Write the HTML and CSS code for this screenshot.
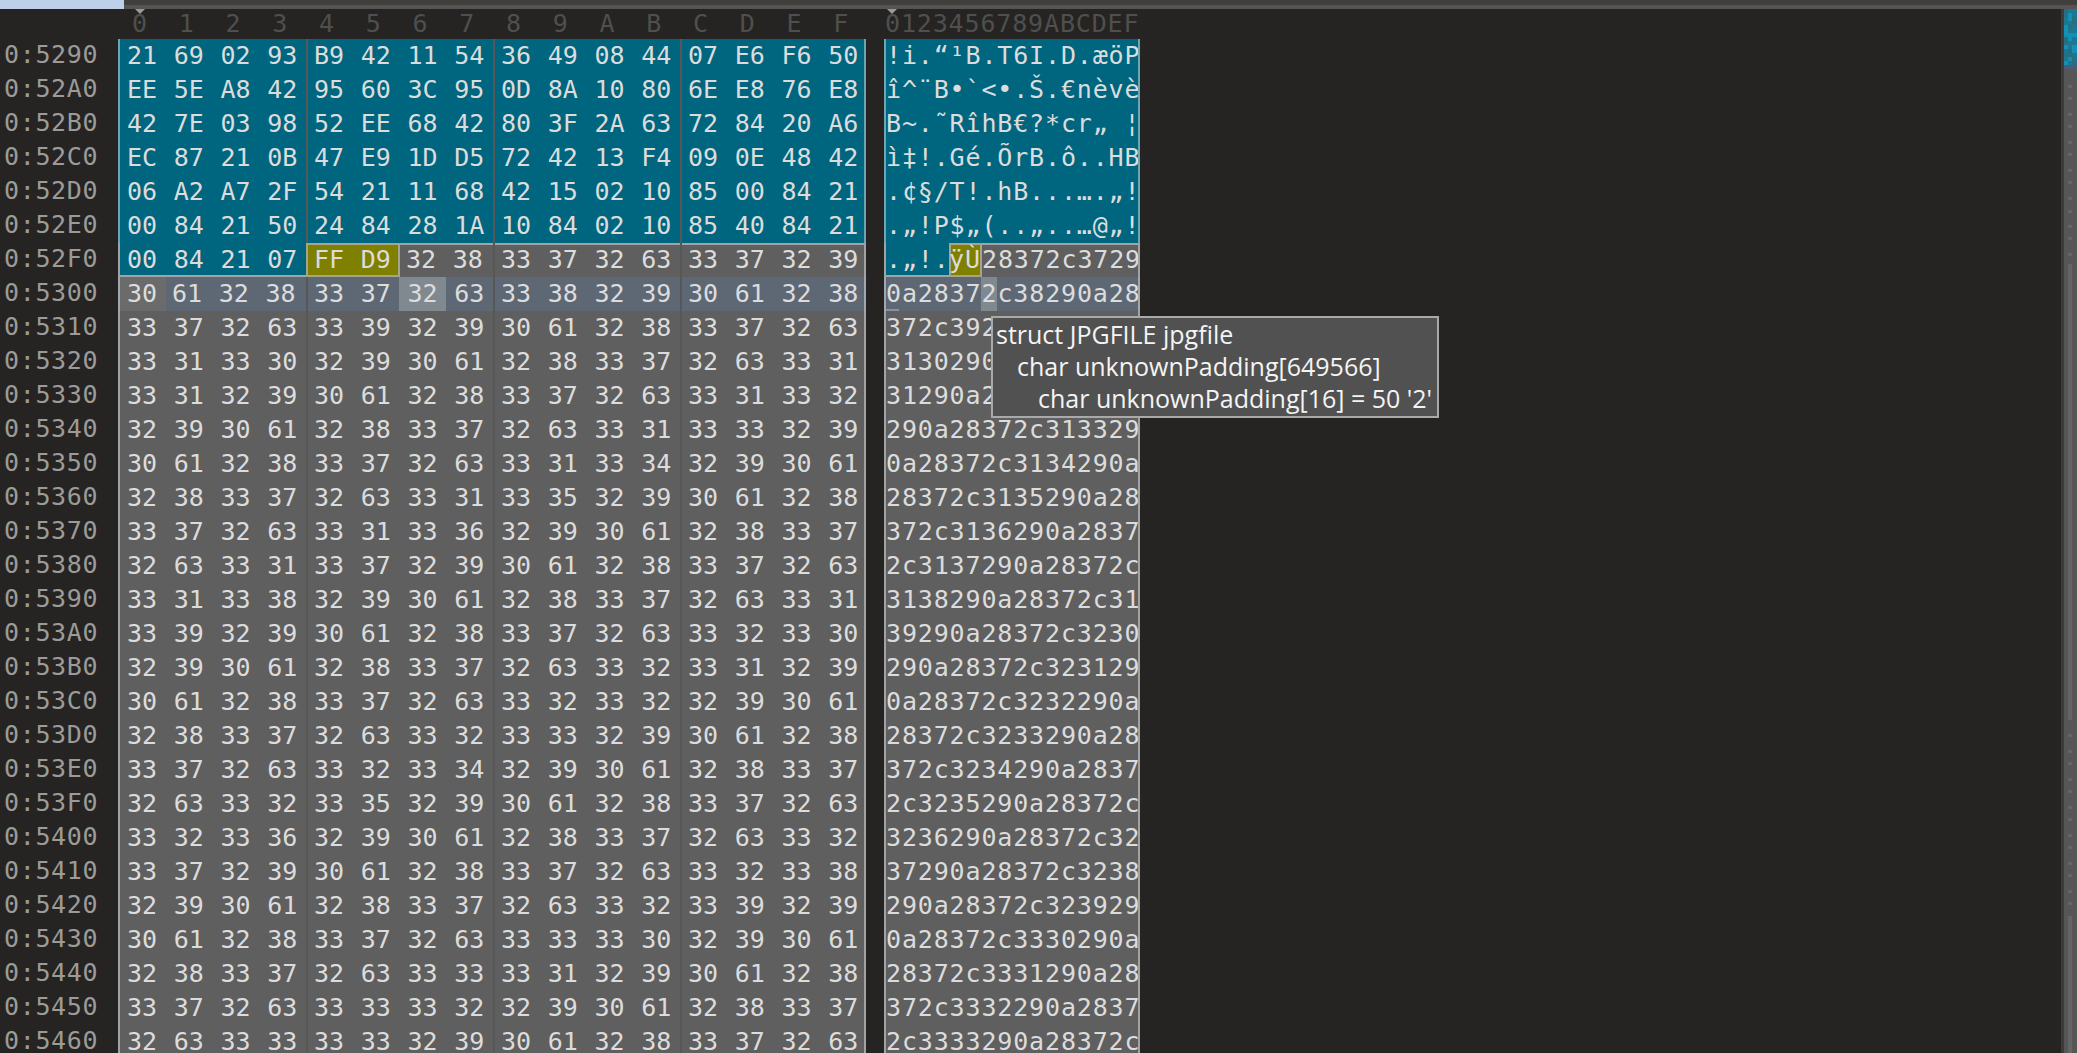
FILE: index.html
```html
<!DOCTYPE html>
<html lang="en">
<head>
<meta charset="utf-8">
<title>Hex editor</title>
<link rel="stylesheet" href="styles.css">
</head>
<body>
<div class="top"><div class="tab"></div><div class="rail"></div></div>
<div class="main">
<div class="view">
<div class="head"><div class="head-hex">0 1 2 3 4 5 6 7 8 9 A B C D E F</div><div class="head-ascii">0123456789ABCDEF</div></div>

<div class="row"><span class="addr">0:5290</span><div class="hex sel"><div class="g">21 69 02 93</div><div class="g">B9 42 11 54</div><div class="g">36 49 08 44</div><div class="g">07 E6 F6 50</div></div><div class="ascii sel">!i.“¹B.T6I.D.æöP</div></div>
<div class="row"><span class="addr">0:52A0</span><div class="hex sel"><div class="g">EE 5E A8 42</div><div class="g">95 60 3C 95</div><div class="g">0D 8A 10 80</div><div class="g">6E E8 76 E8</div></div><div class="ascii sel">î^¨B•`&lt;•.Š.€nèvè</div></div>
<div class="row"><span class="addr">0:52B0</span><div class="hex sel"><div class="g">42 7E 03 98</div><div class="g">52 EE 68 42</div><div class="g">80 3F 2A 63</div><div class="g">72 84 20 A6</div></div><div class="ascii sel">B~.˜RîhB€?*cr„&nbsp;¦</div></div>
<div class="row"><span class="addr">0:52C0</span><div class="hex sel"><div class="g">EC 87 21 0B</div><div class="g">47 E9 1D D5</div><div class="g">72 42 13 F4</div><div class="g">09 0E 48 42</div></div><div class="ascii sel">ì‡!.Gé.ÕrB.ô..HB</div></div>
<div class="row"><span class="addr">0:52D0</span><div class="hex sel"><div class="g">06 A2 A7 2F</div><div class="g">54 21 11 68</div><div class="g">42 15 02 10</div><div class="g">85 00 84 21</div></div><div class="ascii sel">.¢§/T!.hB...….„!</div></div>
<div class="row"><span class="addr">0:52E0</span><div class="hex sel"><div class="g">00 84 21 50</div><div class="g">24 84 28 1A</div><div class="g">10 84 02 10</div><div class="g">85 40 84 21</div></div><div class="ascii sel">.„!P$„(..„..…@„!</div></div>

<div class="row"><span class="addr">0:52F0</span><div class="hex"><div class="g sel edge-b">00 84 21 07</div><div class="g cells"><span class="hit">FF D9</span><span class="rest">32 38</span></div><div class="g edge-t">33 37 32 63</div><div class="g edge-t">33 37 32 39</div></div><div class="ascii split"><span class="sel edge-b a4">.„!.</span><span class="hit a2">ÿÙ</span><span class="rest">28372c3729</span></div></div>

<div class="row"><span class="addr">0:5300</span><div class="hex cur"><div class="g cells"><span class="c first">30</span><span class="c">61</span><span class="c">32</span><span class="c">38</span></div><div class="g cells"><span class="c">33</span><span class="c">37</span><span class="c here">32</span><span class="c">63</span></div><div class="g">33 38 32 39</div><div class="g">30 61 32 38</div></div><div class="ascii split cur tick"><span>0a2837</span><span class="here a1">2</span><span>c38290a28</span></div></div>

<div class="row"><span class="addr">0:5310</span><div class="hex"><div class="g">33 37 32 63</div><div class="g">33 39 32 39</div><div class="g">30 61 32 38</div><div class="g">33 37 32 63</div></div><div class="ascii">372c39290a28372c</div></div>
<div class="row"><span class="addr">0:5320</span><div class="hex"><div class="g">33 31 33 30</div><div class="g">32 39 30 61</div><div class="g">32 38 33 37</div><div class="g">32 63 33 31</div></div><div class="ascii">3130290a28372c31</div></div>
<div class="row"><span class="addr">0:5330</span><div class="hex"><div class="g">33 31 32 39</div><div class="g">30 61 32 38</div><div class="g">33 37 32 63</div><div class="g">33 31 33 32</div></div><div class="ascii">31290a28372c3132</div></div>
<div class="row"><span class="addr">0:5340</span><div class="hex"><div class="g">32 39 30 61</div><div class="g">32 38 33 37</div><div class="g">32 63 33 31</div><div class="g">33 33 32 39</div></div><div class="ascii">290a28372c313329</div></div>
<div class="row"><span class="addr">0:5350</span><div class="hex"><div class="g">30 61 32 38</div><div class="g">33 37 32 63</div><div class="g">33 31 33 34</div><div class="g">32 39 30 61</div></div><div class="ascii">0a28372c3134290a</div></div>
<div class="row"><span class="addr">0:5360</span><div class="hex"><div class="g">32 38 33 37</div><div class="g">32 63 33 31</div><div class="g">33 35 32 39</div><div class="g">30 61 32 38</div></div><div class="ascii">28372c3135290a28</div></div>
<div class="row"><span class="addr">0:5370</span><div class="hex"><div class="g">33 37 32 63</div><div class="g">33 31 33 36</div><div class="g">32 39 30 61</div><div class="g">32 38 33 37</div></div><div class="ascii">372c3136290a2837</div></div>
<div class="row"><span class="addr">0:5380</span><div class="hex"><div class="g">32 63 33 31</div><div class="g">33 37 32 39</div><div class="g">30 61 32 38</div><div class="g">33 37 32 63</div></div><div class="ascii">2c3137290a28372c</div></div>
<div class="row"><span class="addr">0:5390</span><div class="hex"><div class="g">33 31 33 38</div><div class="g">32 39 30 61</div><div class="g">32 38 33 37</div><div class="g">32 63 33 31</div></div><div class="ascii">3138290a28372c31</div></div>
<div class="row"><span class="addr">0:53A0</span><div class="hex"><div class="g">33 39 32 39</div><div class="g">30 61 32 38</div><div class="g">33 37 32 63</div><div class="g">33 32 33 30</div></div><div class="ascii">39290a28372c3230</div></div>
<div class="row"><span class="addr">0:53B0</span><div class="hex"><div class="g">32 39 30 61</div><div class="g">32 38 33 37</div><div class="g">32 63 33 32</div><div class="g">33 31 32 39</div></div><div class="ascii">290a28372c323129</div></div>
<div class="row"><span class="addr">0:53C0</span><div class="hex"><div class="g">30 61 32 38</div><div class="g">33 37 32 63</div><div class="g">33 32 33 32</div><div class="g">32 39 30 61</div></div><div class="ascii">0a28372c3232290a</div></div>
<div class="row"><span class="addr">0:53D0</span><div class="hex"><div class="g">32 38 33 37</div><div class="g">32 63 33 32</div><div class="g">33 33 32 39</div><div class="g">30 61 32 38</div></div><div class="ascii">28372c3233290a28</div></div>
<div class="row"><span class="addr">0:53E0</span><div class="hex"><div class="g">33 37 32 63</div><div class="g">33 32 33 34</div><div class="g">32 39 30 61</div><div class="g">32 38 33 37</div></div><div class="ascii">372c3234290a2837</div></div>
<div class="row"><span class="addr">0:53F0</span><div class="hex"><div class="g">32 63 33 32</div><div class="g">33 35 32 39</div><div class="g">30 61 32 38</div><div class="g">33 37 32 63</div></div><div class="ascii">2c3235290a28372c</div></div>
<div class="row"><span class="addr">0:5400</span><div class="hex"><div class="g">33 32 33 36</div><div class="g">32 39 30 61</div><div class="g">32 38 33 37</div><div class="g">32 63 33 32</div></div><div class="ascii">3236290a28372c32</div></div>
<div class="row"><span class="addr">0:5410</span><div class="hex"><div class="g">33 37 32 39</div><div class="g">30 61 32 38</div><div class="g">33 37 32 63</div><div class="g">33 32 33 38</div></div><div class="ascii">37290a28372c3238</div></div>
<div class="row"><span class="addr">0:5420</span><div class="hex"><div class="g">32 39 30 61</div><div class="g">32 38 33 37</div><div class="g">32 63 33 32</div><div class="g">33 39 32 39</div></div><div class="ascii">290a28372c323929</div></div>
<div class="row"><span class="addr">0:5430</span><div class="hex"><div class="g">30 61 32 38</div><div class="g">33 37 32 63</div><div class="g">33 33 33 30</div><div class="g">32 39 30 61</div></div><div class="ascii">0a28372c3330290a</div></div>
<div class="row"><span class="addr">0:5440</span><div class="hex"><div class="g">32 38 33 37</div><div class="g">32 63 33 33</div><div class="g">33 31 32 39</div><div class="g">30 61 32 38</div></div><div class="ascii">28372c3331290a28</div></div>
<div class="row"><span class="addr">0:5450</span><div class="hex"><div class="g">33 37 32 63</div><div class="g">33 33 33 32</div><div class="g">32 39 30 61</div><div class="g">32 38 33 37</div></div><div class="ascii">372c3332290a2837</div></div>
<div class="row"><span class="addr">0:5460</span><div class="hex"><div class="g">32 63 33 33</div><div class="g">33 33 32 39</div><div class="g">30 61 32 38</div><div class="g">33 37 32 63</div></div><div class="ascii">2c3333290a28372c</div></div>
</div>

<svg class="map" viewBox="0 0 16 1044" width="16" height="1044" aria-hidden="true">
<rect x="0" y="0" width="3" height="1044" fill="#3b3b3a"/>
<rect x="3" y="0" width="13" height="1044" fill="#565656"/>
<rect x="3" y="0" width="13" height="56" fill="#1a7893"/>
<g fill="#1490b4">
<rect x="3" y="16" width="4" height="12"/><rect x="7" y="4" width="4" height="8"/><rect x="11" y="24" width="5" height="4"/><rect x="7" y="24" width="4" height="8"/><rect x="3" y="36" width="4" height="4"/><rect x="11" y="36" width="5" height="8"/><rect x="7" y="48" width="4" height="4"/><rect x="3" y="52" width="4" height="4"/>
</g>
<g fill="#2a6d80">
<rect x="3" y="0" width="4" height="8"/><rect x="11" y="8" width="5" height="8"/><rect x="7" y="16" width="4" height="4"/><rect x="3" y="28" width="4" height="8"/><rect x="7" y="40" width="4" height="8"/><rect x="11" y="48" width="5" height="8"/><rect x="3" y="44" width="4" height="4"/>
</g>
<rect x="3" y="56" width="13" height="4" fill="#4a5a78"/>
<g fill="#656565">
<rect x="7" y="76" width="4" height="3"/><rect x="7" y="88" width="4" height="3"/><rect x="7" y="104" width="4" height="3"/><rect x="7" y="116" width="4" height="3"/><rect x="7" y="132" width="4" height="3"/><rect x="7" y="144" width="4" height="3"/><rect x="7" y="160" width="4" height="3"/><rect x="7" y="172" width="4" height="3"/><rect x="7" y="188" width="4" height="3"/><rect x="7" y="201" width="4" height="3"/><rect x="7" y="216" width="4" height="3"/><rect x="7" y="228" width="4" height="3"/><rect x="7" y="244" width="4" height="3"/>
<rect x="7" y="255" width="4" height="456"/>
<rect x="7" y="725" width="4" height="3"/><rect x="7" y="741" width="4" height="3"/><rect x="7" y="753" width="4" height="3"/><rect x="7" y="769" width="4" height="3"/><rect x="7" y="781" width="4" height="3"/><rect x="7" y="797" width="4" height="3"/><rect x="7" y="809" width="4" height="3"/><rect x="7" y="825" width="4" height="3"/><rect x="7" y="837" width="4" height="3"/><rect x="7" y="853" width="4" height="3"/><rect x="7" y="865" width="4" height="3"/><rect x="7" y="881" width="4" height="3"/><rect x="7" y="893" width="4" height="3"/>
<rect x="7" y="907" width="4" height="137"/>
</g>
</svg>
</div>

<div class="tip">
<div>struct JPGFILE jpgfile</div>
<div class="l2">char unknownPadding[649566]</div>
<div class="l3">char unknownPadding[16] = 50 '2'</div>
</div>
</body>
</html>
```
FILE: styles.css
```css
html, body {
  margin: 0;
  height: 1053px;
  overflow: hidden;
  background: #252423;
}

body {
  font-family: "DejaVu Sans Mono", "Liberation Mono", monospace;
  font-size: 25px;
  line-height: 34px;
  color: #dcdcdc;
  white-space: nowrap;
}

.top {
  display: flex;
  height: 9px;
}

.tab {
  width: 124px;
  background: #bcd0ea;
}

.rail {
  flex: 1;
  background: #403f3c;
  border-bottom: 4px solid #545454;
}

.main {
  display: flex;
  height: 1044px;
  overflow: hidden;
}

.view {
  flex: 1;
  min-width: 0;
}

.map {
  flex: none;
  display: block;
}

.head {
  display: flex;
  height: 30px;
  line-height: 30px;
  color: #504f4d;
}

.head-hex {
  position: relative;
  flex: none;
  width: 884px;
  padding-left: 132px;
  box-sizing: border-box;
  word-spacing: 16.65px;
}

.head-ascii {
  position: relative;
  padding-left: 1px;
  letter-spacing: .85px;
}

.head-hex::before,
.head-ascii::before {
  content: "";
  position: absolute;
  top: 0;
  left: 135px;
  border: 5px solid transparent;
  border-top-color: #9a9a9a;
  border-bottom-width: 0;
}

.head-ascii::before {
  left: 3px;
}

.row {
  display: flex;
  height: 34px;
}

.addr {
  flex: none;
  box-sizing: border-box;
  width: 118px;
  padding-left: 4px;
  line-height: 32px;
  letter-spacing: .65px;
  color: #9c9b97;
}

.hex {
  flex: none;
  display: flex;
  box-sizing: border-box;
  width: 748px;
  margin-right: 18px;
  background: #5f5f5f;
  border-left: 2px solid rgba(255, 255, 255, .42);
  border-right: 2px solid rgba(255, 255, 255, .42);
  word-spacing: 1.6px;
}

.g {
  flex: none;
  box-sizing: border-box;
  width: 187px;
  padding-left: 6px;
  border-left: 2px solid #575757;
}

.g:first-child {
  width: 186px;
  padding-left: 7px;
  border-left: 0;
}

.g:last-child {
  width: 184px;
}

.cells {
  display: flex;
  padding-left: 0;
}

.g.cells:first-child {
  padding-left: 0;
}

.c {
  flex: none;
  box-sizing: border-box;
  width: 46.75px;
  padding-left: 6px;
}

.g:first-child .c:first-child {
  padding-left: 7px;
  width: 46px;
}

.sel {
  background: #00667f;
}

.cur {
  background: #5e6875;
}

.first {
  background: #6b6b6b;
}

.here {
  background: #808890;
}

.c.here {
  margin-left: -2.5px;
  margin-right: 2.5px;
  padding-left: 8.5px;
}

.hit {
  flex: none;
  box-sizing: border-box;
  background: #808000;
  box-shadow: inset 0 0 0 2px #a6a58c;
}

.g .hit {
  width: 94px;
  margin-left: -2px;
  padding-left: 8px;
}

.rest {
  flex: 1;
  box-shadow: inset 0 2px #a3a3a3;
}

.g .rest {
  padding-left: 6px;
}

.edge-t {
  box-shadow: inset 0 2px #a3a3a3;
}

.edge-b {
  box-shadow: inset 0 -2px #a3a3a3;
}

.ascii {
  flex: none;
  box-sizing: border-box;
  width: 256px;
  background: #5f5f5f;
  border-left: 2px solid rgba(255, 255, 255, .42);
  border-right: 2px solid rgba(255, 255, 255, .42);
  letter-spacing: .85px;
  overflow: hidden;
}

.ascii.sel {
  background: #00667f;
}

.ascii.cur {
  background: #5e6875;
}

.split {
  display: flex;
}

.a4 {
  flex: none;
  width: 63px;
}

.a2 {
  width: 33px;
}

.a1 {
  flex: none;
  width: 16px;
}

.tick {
  position: relative;
}

.tick::after {
  content: "";
  position: absolute;
  left: -1px;
  bottom: 0;
  width: 14px;
  height: 2px;
  background: #8a919a;
}

.tip {
  position: absolute;
  left: 991px;
  top: 316px;
  box-sizing: border-box;
  width: 448px;
  height: 102px;
  padding: 0 0 0 3px;
  background: #515151;
  border: 2px solid #a9a9a9;
  font-family: "Open Sans", "Noto Sans", sans-serif;
  font-size: 25px;
  line-height: 32px;
  color: #f4f4f4;
}

.l2 {
  padding-left: 21px;
}

.l3 {
  padding-left: 42px;
}
```
